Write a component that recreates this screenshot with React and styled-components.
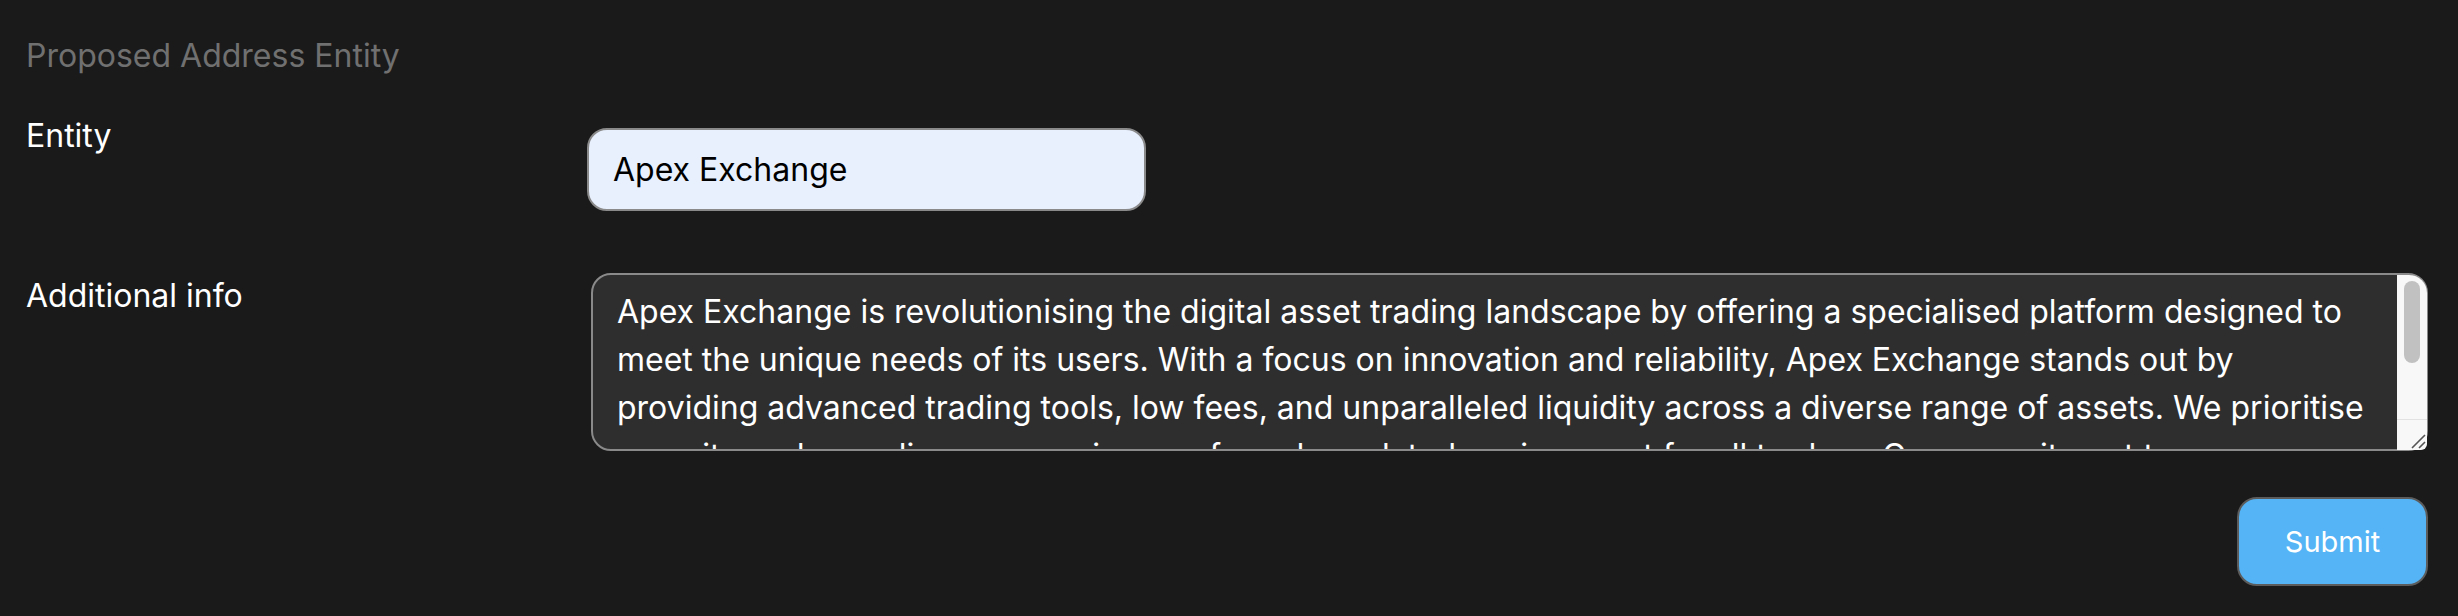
import React, { useState } from "react";
import styled, { createGlobalStyle } from "styled-components";

const COLORS = {
  page: "#1a1a1a",
  muted: "#707070",
  text: "#ffffff",
  border: "#8a8a8a",
  inputBg: "#e8f0fe",
  areaBg: "#2e2e2e",
  accent: "#54b4f5",
};

const GlobalStyle = createGlobalStyle`
  html, body {
    margin: 0;
    padding: 0;
    background: ${COLORS.page};
    font-family: Inter, "Noto Sans", sans-serif;
  }
`;

const Form = styled.form`
  padding: 36px 30px 0 26px;
`;

const Title = styled.h2`
  margin: 0;
  font-size: 32px;
  line-height: 39px;
  font-weight: 400;
  color: ${COLORS.muted};
`;

const Row = styled.div`
  display: grid;
  grid-template-columns: 561px 1fr;
  align-items: start;
  margin-top: ${(props) => props.gap}px;
`;

const Label = styled.label`
  font-size: 32px;
  line-height: 39px;
  color: ${COLORS.text};
  margin-top: ${(props) => props.offset || 0}px;
`;

const TextInput = styled.input`
  box-sizing: border-box;
  width: 559px;
  height: 83px;
  margin-top: 12px;
  padding: 0 24px;
  border: 2px solid ${COLORS.border};
  border-radius: 20px;
  background: ${COLORS.inputBg};
  color: #000;
  font-family: Inter, "Noto Sans", sans-serif;
  font-size: 32px;
  outline: none;
`;

const AreaWrap = styled.div`
  position: relative;
  margin-left: 4px;
`;

const TextArea = styled.textarea`
  box-sizing: border-box;
  display: block;
  width: 100%;
  height: 178px;
  padding: 13px 54px 13px 24px;
  border: 2px solid ${COLORS.border};
  border-radius: 20px;
  background: ${COLORS.areaBg};
  color: ${COLORS.text};
  font-family: Inter, "Noto Sans", sans-serif;
  font-size: 32px;
  line-height: 48px;
  outline: none;
  resize: none;
  overflow: hidden;
`;

/* the textarea's own scrollbar, drawn over its right edge */
const ScrollTrack = styled.div`
  position: absolute;
  top: 2px;
  right: 1px;
  bottom: 1px;
  width: 30px;
  display: flex;
  flex-direction: column;
  background: #f8f8f8;
  border-radius: 0 18px 6px 0;
  overflow: hidden;
  pointer-events: none;
`;

const Thumb = styled.div`
  margin: 6px 7px 0;
  height: 82px;
  border-radius: 8px;
  background: #c1c1c1;
`;

const Resizer = styled.div`
  margin-top: auto;
  height: 29px;
  border-top: 1px solid #e2e2e2;
  display: flex;
  justify-content: flex-end;
  align-items: flex-end;
  padding: 0 1px 1px 0;
`;

const Actions = styled.div`
  display: flex;
  justify-content: flex-end;
  margin-top: 46px;
`;

const SubmitButton = styled.button`
  width: 191px;
  height: 89px;
  border: 2px solid #5c5c5c;
  border-radius: 20px;
  background: ${COLORS.accent};
  color: #fff;
  font-family: Inter, "Noto Sans", sans-serif;
  font-size: 29px;
  cursor: pointer;
`;

const INFO =
  "Apex Exchange is revolutionising the digital asset trading landscape by offering a specialised platform designed to meet the unique needs of its users. With a focus on innovation and reliability, Apex Exchange stands out by providing advanced trading tools, low fees, and unparalleled liquidity across a diverse range of assets. We prioritise security and compliance, ensuring a safe and regulated environment for all traders. Our commitment to transparency and customer support makes us the preferred choice for traders worldwide.";

function App() {
  const [entity, setEntity] = useState("Apex Exchange");
  const [info, setInfo] = useState(INFO);

  return (
    <>
      <GlobalStyle />
      <Form onSubmit={(e) => e.preventDefault()}>
        <Title>Proposed Address Entity</Title>
        <Row gap={41}>
          <Label htmlFor="entity">Entity</Label>
          <div>
            <TextInput
              id="entity"
              value={entity}
              onChange={(e) => setEntity(e.target.value)}
            />
          </div>
        </Row>
        <Row gap={62}>
          <Label htmlFor="info" offset={3}>
            Additional info
          </Label>
          <AreaWrap>
            <TextArea
              id="info"
              value={info}
              onChange={(e) => setInfo(e.target.value)}
            />
            <ScrollTrack>
              <Thumb />
              <Resizer>
                <svg width="16" height="16" viewBox="0 0 16 16">
                  <path
                    d="M15 2 L2 15 M15 9 L9 15"
                    stroke="#555"
                    strokeWidth="1.6"
                    fill="none"
                  />
                </svg>
              </Resizer>
            </ScrollTrack>
          </AreaWrap>
        </Row>
        <Actions>
          <SubmitButton type="submit">Submit</SubmitButton>
        </Actions>
      </Form>
    </>
  );
}

export default App;
